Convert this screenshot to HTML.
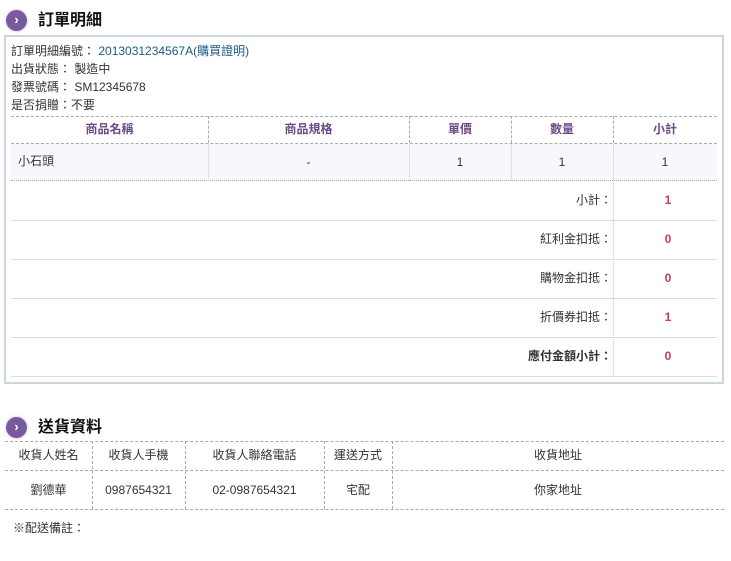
<!DOCTYPE html>
<html><head><meta charset="utf-8"><style>
*{margin:0;padding:0;box-sizing:border-box}
body{width:731px;height:561px;background:#fff;font-family:"Liberation Sans","Noto Sans CJK TC",sans-serif;font-size:12px;line-height:14px;color:#333;position:relative;overflow:hidden}
.a{position:absolute}
.ic{width:21px;height:21px;border-radius:50%;background:#7a5a9e;box-shadow:0 0 3px #c9b8dc;color:#fff;font-size:13px;font-weight:bold;line-height:20px;text-align:center}
.t{font-size:16px;line-height:20px;font-weight:bold;color:#111}
.box{left:4px;top:35px;width:720px;height:349px;border:2px solid #ccd6e0}
.hd{color:#6a4a86;font-weight:bold;text-align:center;line-height:25px}
.c{text-align:center}
.red{color:#d03a52;font-weight:bold;text-align:center}
.line{height:1px;background:#ddd}
.dh{border-top:1px dashed #aaa}
.dv{border-left:1px dashed #aaa}
.dt{border-left:1px dotted #ccc}
</style></head><body>
<div class="a ic" style="left:6px;top:10px">›</div>
<div class="a t" style="left:38px;top:11px">訂單明細</div>
<div class="a box"></div>
<div class="a" style="left:11px;top:42px;line-height:18px">
訂單明細編號： <span style="color:#1a5a8a">2013031234567A(購買證明)</span><br>出貨狀態： 製造中<br>發票號碼： SM12345678<br>是否捐贈：不要</div>
<div class="a dh" style="left:11px;top:116px;width:706px"></div>
<div class="a dh" style="left:11px;top:143px;width:706px"></div>
<div class="a" style="left:11px;top:144px;width:706px;height:37px;background:#f8f8fc;border-bottom:1px dotted #aaa"></div>
<div class="a dv" style="left:208px;top:116px;height:27px"></div>
<div class="a dv" style="left:409px;top:116px;height:27px"></div>
<div class="a dv" style="left:511px;top:116px;height:27px"></div>
<div class="a dv" style="left:613px;top:116px;height:27px"></div>
<div class="a dt" style="left:208px;top:144px;height:37px"></div>
<div class="a dt" style="left:409px;top:144px;height:37px"></div>
<div class="a dt" style="left:511px;top:144px;height:37px"></div>
<div class="a dt" style="left:613px;top:144px;height:232px"></div>
<div class="a hd" style="left:11px;top:117px;width:197px">商品名稱</div>
<div class="a hd" style="left:208px;top:117px;width:201px">商品規格</div>
<div class="a hd" style="left:409px;top:117px;width:102px">單價</div>
<div class="a hd" style="left:511px;top:117px;width:102px">數量</div>
<div class="a hd" style="left:613px;top:117px;width:104px">小計</div>
<div class="a" style="left:18px;top:154px">小石頭</div>
<div class="a c" style="left:208px;top:155px;width:201px">-</div>
<div class="a c" style="left:409px;top:155px;width:102px">1</div>
<div class="a c" style="left:511px;top:155px;width:102px">1</div>
<div class="a c" style="left:613px;top:155px;width:104px">1</div>
<div class="a line" style="left:11px;top:220px;width:706px"></div>
<div class="a line" style="left:11px;top:259px;width:706px"></div>
<div class="a line" style="left:11px;top:298px;width:706px"></div>
<div class="a line" style="left:11px;top:337px;width:706px"></div>
<div class="a line" style="left:11px;top:376px;width:706px"></div>
<div class="a" style="right:119px;top:193px">小計：</div><div class="a red" style="left:613px;top:193px;width:110px">1</div>
<div class="a" style="right:119px;top:232px">紅利金扣抵：</div><div class="a red" style="left:613px;top:232px;width:110px">0</div>
<div class="a" style="right:119px;top:271px">購物金扣抵：</div><div class="a red" style="left:613px;top:271px;width:110px">0</div>
<div class="a" style="right:119px;top:310px">折價券扣抵：</div><div class="a red" style="left:613px;top:310px;width:110px">1</div>
<div class="a" style="right:119px;top:349px;font-weight:bold">應付金額小計：</div><div class="a red" style="left:613px;top:349px;width:110px">0</div>

<div class="a ic" style="left:6px;top:417px">›</div>
<div class="a t" style="left:38px;top:418px">送貨資料</div>
<div class="a dh" style="left:5px;top:441px;width:719px"></div>
<div class="a dh" style="left:5px;top:470px;width:719px"></div>
<div class="a dh" style="left:5px;top:509px;width:719px"></div>
<div class="a dv" style="left:92px;top:441px;height:68px"></div>
<div class="a dv" style="left:185px;top:441px;height:68px"></div>
<div class="a dv" style="left:324px;top:441px;height:68px"></div>
<div class="a dv" style="left:392px;top:441px;height:68px"></div>
<div class="a c" style="left:5px;top:448px;width:87px">收貨人姓名</div>
<div class="a c" style="left:92px;top:448px;width:93px">收貨人手機</div>
<div class="a c" style="left:185px;top:448px;width:139px">收貨人聯絡電話</div>
<div class="a c" style="left:324px;top:448px;width:68px">運送方式</div>
<div class="a c" style="left:392px;top:448px;width:332px">收貨地址</div>
<div class="a c" style="left:5px;top:483px;width:87px">劉德華</div>
<div class="a c" style="left:92px;top:483px;width:93px">0987654321</div>
<div class="a c" style="left:185px;top:483px;width:139px">02-0987654321</div>
<div class="a c" style="left:324px;top:483px;width:68px">宅配</div>
<div class="a c" style="left:392px;top:483px;width:332px">你家地址</div>
<div class="a" style="left:13px;top:521px">※配送備註：</div>
</body></html>
